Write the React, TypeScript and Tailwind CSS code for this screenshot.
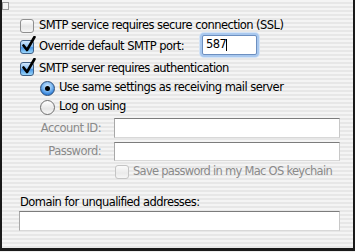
import React from 'react';

function Checkbox({ checked, disabled }: { checked?: boolean; disabled?: boolean }) {
  return (
    <span className="relative inline-block w-[14px] h-[14px] shrink-0">
      <span
        className={
          checked
            ? 'absolute inset-0 rounded-[3px] border border-[#3f5f86] bg-[linear-gradient(180deg,#d2e8fc_0%,#8cc0f2_45%,#4b98e6_55%,#9ad6fb_100%)]'
            : disabled
            ? 'absolute inset-0 rounded-[3px] border border-[#c4c4c4] bg-[linear-gradient(180deg,#fafafa_0%,#eaeaea_60%,#f6f6f6_100%)]'
            : 'absolute inset-0 rounded-[3px] border border-[#8f8f8f] bg-[linear-gradient(180deg,#ffffff_0%,#e6e6e6_55%,#f6f6f6_100%)]'
        }
      />
      {checked && (
        <svg className="absolute left-[1px] top-[-4px]" width="15" height="16" viewBox="0 0 15 16">
          <path d="M2.5 9.5 L6 14 L13.5 1" fill="none" stroke="#000" strokeWidth="2.6" strokeLinecap="round" strokeLinejoin="round" />
        </svg>
      )}
    </span>
  );
}

function Radio({ checked }: { checked?: boolean }) {
  return (
    <span
      className={
        checked
          ? 'relative inline-flex items-center justify-center w-[15px] h-[15px] shrink-0 rounded-full border border-[#2f4f78] bg-[radial-gradient(circle_at_50%_35%,#d8ecfd_0%,#7db8f1_45%,#2f7fd9_75%,#86c6f6_100%)]'
          : 'relative inline-flex items-center justify-center w-[15px] h-[15px] shrink-0 rounded-full border border-[#6e6e6e] bg-[linear-gradient(180deg,#ffffff_0%,#e6e6e6_60%,#f8f8f8_100%)]'
      }
    >
      {checked && <span className="block w-[5px] h-[5px] rounded-full bg-black" />}
    </span>
  );
}

function Field({ className }: { className?: string }) {
  return (
    <div
      className={
        'bg-white border border-t-[#7c7c7c] border-l-[#a8a8a8] border-r-[#c8c8c8] border-b-[#d8d8d8] ' +
        (className ?? '')
      }
    />
  );
}

export default function App() {
  return (
    <div className="w-[355px] h-[252px] bg-[#efefef]">
      <div
        className="relative w-[355px] h-[251px] border-l-2 border-r-2 border-b-[3px] border-[#1a1a1a] bg-[repeating-linear-gradient(180deg,#f4f4f4_0px,#f4f4f4_2px,#e7e7e7_2px,#e7e7e7_4px)] text-[11.5px] tracking-[-0.55px] text-black"
        style={{ fontFamily: '"DejaVu Sans", "Liberation Sans", sans-serif' }}
      >
        <div className="absolute left-[0px] top-[2px] w-[7px] h-[8px] border border-[#9a9a9a] bg-[#f6f6f6]" />

        <div className="pl-[18px] pt-[18px]">
          <div className="flex items-center gap-[5px] h-[16px]">
            <Checkbox />
            <span>SMTP service requires secure connection (SSL)</span>
          </div>

          <div className="flex items-center mt-[1px] h-[20px]">
            <span className="mt-[3px] flex">
              <Checkbox checked />
            </span>
            <span className="ml-[5px] w-[163px] mt-[4px]">Override default SMTP port:</span>
            <div className="w-[55px] h-[20px] rounded-[2px] bg-white border border-[#6c8fc0] shadow-[0_0_0_2px_#a9c8ee,0_0_0_3px_#d3e3f6] flex items-center pl-[3px]">
              <span>587</span>
              <span className="w-[1px] h-[12px] bg-black" />
            </div>
          </div>

          <div className="flex items-center gap-[5px] mt-[6px] h-[16px]">
            <Checkbox checked />
            <span>SMTP server requires authentication</span>
          </div>

          <div className="pl-[20px]">
            <div className="flex items-center gap-[4px] mt-[3px] h-[16px]">
              <Radio checked />
              <span>Use same settings as receiving mail server</span>
            </div>
            <div className="flex items-center gap-[4px] mt-[3px] h-[16px]">
              <Radio />
              <span>Log on using</span>
            </div>
          </div>

          <div className="flex items-center mt-[3px]">
            <span className="w-[81px] text-right text-[#8a8a8a] mt-[1px]">Account ID:</span>
            <Field className="ml-[13px] w-[226px] h-[20px]" />
          </div>
          <div className="flex items-center mt-[4px]">
            <span className="w-[81px] text-right text-[#8a8a8a] mt-[1px]">Password:</span>
            <Field className="ml-[13px] w-[226px] h-[19px]" />
          </div>
          <div className="flex items-center gap-[4px] mt-[3px] pl-[95px] h-[16px] text-[#8a8a8a]">
            <Checkbox disabled />
            <span className="tracking-[-0.72px]">Save password in my Mac OS keychain</span>
          </div>

          <div className="mt-[15px] leading-[14px]">Domain for unqualified addresses:</div>
          <Field className="mt-[2px] w-[321px] h-[20px] -ml-[1px]" />
        </div>
      </div>
    </div>
  );
}
